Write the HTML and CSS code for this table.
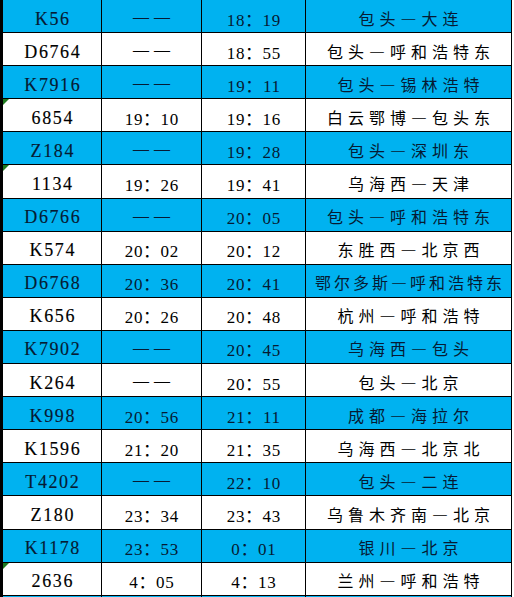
FILE: index.html
```html
<!DOCTYPE html>
<html lang="zh-CN">
<head>
<meta charset="utf-8">
<title>列车时刻表</title>
<link rel="stylesheet" href="styles.css">
</head>
<body>
<div class="sheet">
  <div class="row blue"><div class="cell num">K56</div><div class="cell time dash">——</div><div class="cell time">18：19</div><div class="cell route">包头—大连</div></div>
  <div class="row"><div class="cell num">D6764</div><div class="cell time dash">——</div><div class="cell time">18：55</div><div class="cell route">包头—呼和浩特东</div></div>
  <div class="row blue"><div class="cell num">K7916</div><div class="cell time dash">——</div><div class="cell time">19：11</div><div class="cell route">包头—锡林浩特</div></div>
  <div class="row"><div class="cell num flag">6854</div><div class="cell time">19：10</div><div class="cell time">19：16</div><div class="cell route">白云鄂博—包头东</div></div>
  <div class="row blue"><div class="cell num">Z184</div><div class="cell time dash">——</div><div class="cell time">19：28</div><div class="cell route">包头—深圳东</div></div>
  <div class="row"><div class="cell num flag">1134</div><div class="cell time">19：26</div><div class="cell time">19：41</div><div class="cell route">乌海西—天津</div></div>
  <div class="row blue"><div class="cell num">D6766</div><div class="cell time dash">——</div><div class="cell time">20：05</div><div class="cell route">包头—呼和浩特东</div></div>
  <div class="row"><div class="cell num">K574</div><div class="cell time">20：02</div><div class="cell time">20：12</div><div class="cell route">东胜西—北京西</div></div>
  <div class="row blue"><div class="cell num">D6768</div><div class="cell time">20：36</div><div class="cell time">20：41</div><div class="cell route tight">鄂尔多斯—呼和浩特东</div></div>
  <div class="row"><div class="cell num">K656</div><div class="cell time">20：26</div><div class="cell time">20：48</div><div class="cell route">杭州—呼和浩特</div></div>
  <div class="row blue"><div class="cell num">K7902</div><div class="cell time dash">——</div><div class="cell time">20：45</div><div class="cell route">乌海西—包头</div></div>
  <div class="row"><div class="cell num">K264</div><div class="cell time dash">——</div><div class="cell time">20：55</div><div class="cell route">包头—北京</div></div>
  <div class="row blue"><div class="cell num">K998</div><div class="cell time">20：56</div><div class="cell time">21：11</div><div class="cell route">成都—海拉尔</div></div>
  <div class="row"><div class="cell num">K1596</div><div class="cell time">21：20</div><div class="cell time">21：35</div><div class="cell route">乌海西—北京北</div></div>
  <div class="row blue"><div class="cell num">T4202</div><div class="cell time dash">——</div><div class="cell time">22：10</div><div class="cell route">包头—二连</div></div>
  <div class="row"><div class="cell num">Z180</div><div class="cell time">23：34</div><div class="cell time">23：43</div><div class="cell route">乌鲁木齐南—北京</div></div>
  <div class="row blue"><div class="cell num">K1178</div><div class="cell time">23：53</div><div class="cell time">0：01</div><div class="cell route">银川—北京</div></div>
  <div class="row"><div class="cell num flag">2636</div><div class="cell time">4：05</div><div class="cell time">4：13</div><div class="cell route">兰州—呼和浩特</div></div>
  <div class="row blue tail"><div class="cell"></div><div class="cell"></div><div class="cell"></div><div class="cell"></div></div>
</div>
</body>
</html>
```
FILE: styles.css
```css
html, body {
  margin: 0;
  padding: 0;
  background: #ffffff;
}

.sheet {
  width: 509px;
  padding-left: 3px;
  background: #000000;
  display: flex;
  flex-direction: column;
  gap: 1px;
}

.row {
  display: grid;
  grid-template-columns: 98px 99px 103px 205px;
  column-gap: 1px;
  height: 32.1px;
  padding-right: 1px;
}

.row.tail {
  height: 1px;
}

.cell {
  background: #ffffff;
  color: #000000;
  display: flex;
  align-items: center;
  justify-content: center;
  padding-top: 4px;
  box-sizing: border-box;
  white-space: nowrap;
  position: relative;
  overflow: hidden;
}

.row.tail .cell {
  padding: 0;
}

.row.blue .cell {
  background: #00b2f0;
  color: #061a33;
}

.num {
  font-family: "Liberation Serif", "Noto Sans CJK SC", serif;
  font-size: 18px;
  letter-spacing: 1.6px;
  padding-left: 1.6px;
  padding-top: 6px;
  -webkit-text-stroke: 0.15px currentColor;
}

.time {
  font-family: "Liberation Serif", "Noto Sans CJK SC", serif;
  font-size: 17px;
  letter-spacing: 0.6px;
  padding-left: 0.6px;
}

.time.dash {
  font-size: 16px;
  letter-spacing: 5px;
  padding-left: 5px;
  padding-top: 2px;
}

.route {
  font-family: "Noto Sans CJK SC", sans-serif;
  font-size: 16px;
  font-weight: 400;
  letter-spacing: 5px;
  padding-left: 5px;
  padding-top: 3px;
}

.route.tight {
  letter-spacing: 3px;
  padding-left: 3px;
}

.flag::before {
  content: "";
  position: absolute;
  top: 0;
  left: 0;
  width: 0;
  height: 0;
  border-top: 6px solid #1f7a1f;
  border-right: 6px solid transparent;
}
```
